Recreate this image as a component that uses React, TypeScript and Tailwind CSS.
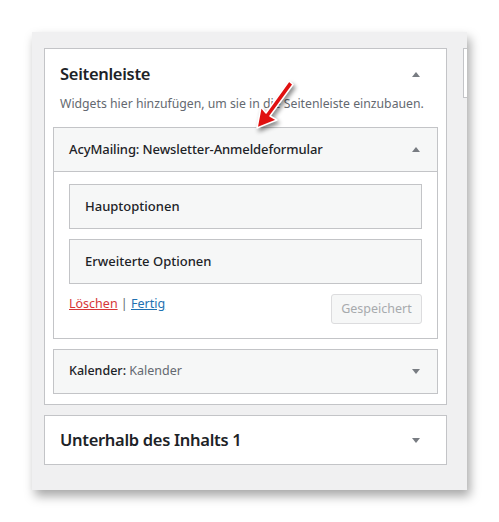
import React from "react";

const Up = () => (
  <svg width="8" height="5" viewBox="0 0 8 5" className="block">
    <path d="M0 5 L4 0 L8 5 Z" fill="#787c82" />
  </svg>
);

const Down = () => (
  <svg width="8" height="5" viewBox="0 0 8 5" className="block">
    <path d="M0 0 L8 0 L4 5 Z" fill="#787c82" />
  </svg>
);

const Arrow = () => (
  <svg
    width="48"
    height="60"
    viewBox="0 0 48 60"
    className="absolute left-[251px] top-[76px]"
    style={{ filter: "drop-shadow(2px 3px 2px rgba(0,0,0,0.45))" }}
  >
    <path
      d="M38 5 L15 37 L10 31 L6 52 L26 44 L19 40 L42 8.5 Z"
      fill="#e01010"
      stroke="#ffffff"
      strokeWidth="1.5"
      strokeLinejoin="round"
    />
  </svg>
);

export default function App() {
  return (
    <div className="relative h-[522px] w-[499px] bg-white pl-[32px] pt-[32px] font-['Noto_Sans',sans-serif] text-[#1d2327]">
      <div className="flex h-[458px] w-[435px] gap-[16px] overflow-hidden bg-[#f0f0f1] pl-[12px] pt-[16px] shadow-[3px_6px_10px_rgba(0,0,0,0.35)]">
        <div className="flex w-[403px] shrink-0 flex-col gap-[10px]">
          {/* Seitenleiste */}
          <div className="border border-[#c3c4c7] bg-white px-[8px] pb-[10px]">
            <div className="flex items-center justify-between pl-[7px] pr-[18px] pt-[12px]">
              <h2 className="text-[16.5px] font-semibold leading-[26px] tracking-[-0.3px]">Seitenleiste</h2>
              <Up />
            </div>
            <p className="pl-[7px] pt-[8px] text-[12.25px] leading-[18px] text-[#646970]">
              Widgets hier hinzufügen, um sie in die Seitenleiste einzubauen.
            </p>

            <div className="mt-[14px] border border-[#c3c4c7]">
              <div className="flex h-[44px] items-center justify-between border-b border-[#c3c4c7] bg-[#f6f7f7] pl-[15px] pr-[17px]">
                <span className="text-[13px] font-medium tracking-[-0.1px]">AcyMailing: Newsletter-Anmeldeformular</span>
                <Up />
              </div>
              <div className="px-[15px] pb-[14px] pt-[12px]">
                <div className="flex h-[45px] items-center border border-[#c3c4c7] bg-[#f6f7f7] pl-[15px] text-[13px] font-medium">
                  Hauptoptionen
                </div>
                <div className="mt-[10px] flex h-[45px] items-center border border-[#c3c4c7] bg-[#f6f7f7] pl-[15px] text-[13px] font-medium">
                  Erweiterte Optionen
                </div>
                <div className="mt-[10px] flex items-start justify-between">
                  <div className="pt-[1px] text-[12.5px] leading-[18px]">
                    <span className="text-[#d63638] underline">Löschen</span>
                    <span className="text-[#646970]"> | </span>
                    <span className="text-[#2271b1] underline">Fertig</span>
                  </div>
                  <div className="flex h-[30px] w-[91px] items-center justify-center rounded-[3px] border border-[#dcdcde] bg-[#f6f7f7] text-[12.5px] text-[#a7aaad]">
                    Gespeichert
                  </div>
                </div>
              </div>
            </div>

            <div className="mt-[10px] flex h-[45px] items-center justify-between border border-[#c3c4c7] bg-[#f6f7f7] pl-[15px] pr-[17px]">
              <span className="text-[12.5px] font-medium">
                Kalender:<span className="font-normal text-[#646970]"> Kalender</span>
              </span>
              <Down />
            </div>
          </div>

          {/* Unterhalb des Inhalts 1 */}
          <div className="flex h-[50px] items-center justify-between border border-[#c3c4c7] bg-white pl-[15px] pr-[26px]">
            <h2 className="text-[16.5px] font-semibold tracking-[-0.3px]">Unterhalb des Inhalts 1</h2>
            <Down />
          </div>
        </div>

        <div className="h-[50px] w-[40px] shrink-0 border border-[#c3c4c7] bg-white" />
      </div>
      <Arrow />
    </div>
  );
}
